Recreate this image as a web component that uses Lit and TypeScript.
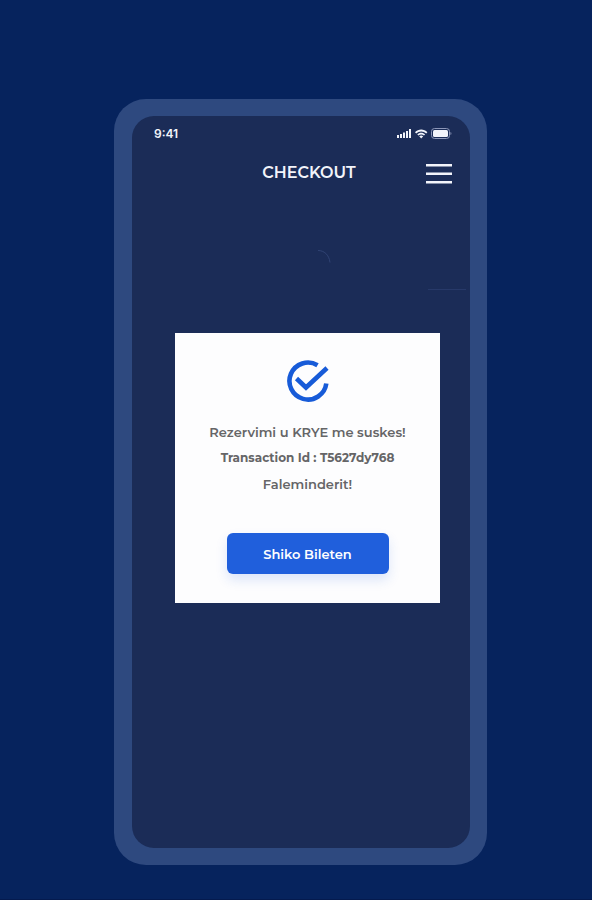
import { LitElement, html, css } from "lit";
import { customElement, property } from "lit/decorators.js";

@customElement("status-bar")
class StatusBar extends LitElement {
  static styles = css`
    :host {
      display: flex;
      align-items: center;
      justify-content: space-between;
      height: 20px;
      color: #f2f4fa;
    }
    .time {
      font-family: Inter, "Liberation Sans", sans-serif;
      font-size: 12px;
      line-height: 20px;
      font-weight: 600;
    }
    .signals {
      display: block;
    }
  `;
  render() {
    return html`
      <span class="time">9:41</span>
      <svg class="signals" width="56" height="14" viewBox="0 0 56 14" fill="currentColor" aria-hidden="true">
        <rect x="1" y="8" width="2" height="3" />
        <rect x="4" y="7" width="2" height="4" />
        <rect x="7" y="5.5" width="2" height="5.5" />
        <rect x="10" y="4" width="2" height="7" />
        <rect x="13" y="2" width="2" height="9" />
        <path d="M19 5.3C22.4 1.7 28 1.7 31.4 5.3L30.2 6.6C27.5 3.8 22.9 3.8 20.2 6.6Z" />
        <path d="M21.3 7.4C23.5 5.2 26.9 5.2 29.1 7.4L28 8.6C26.4 7 24 7 22.4 8.6Z" />
        <path d="M23.2 9.3C24.4 8.3 26 8.3 27.2 9.3L25.2 11.4Z" />
        <rect x="35.5" y="1.5" width="18" height="10" rx="3" fill="none" stroke="#8d97b8" />
        <rect x="37" y="3" width="15" height="7" rx="1.5" />
        <path d="M54.5 5v3c1.200-.5 1.200-2.500 0-3z" fill="#8d97b8" />
      </svg>
    `;
  }
}

@customElement("confirm-dialog")
class ConfirmDialog extends LitElement {
  @property({ attribute: "transaction-id" }) transactionId = "";

  static styles = css`
    :host {
      display: flex;
      flex-direction: column;
      align-items: center;
      padding: 27px 16px 29px;
      background: #fdfdfe;
      color: #656567;
      text-align: center;
    }
    .check {
      display: block;
      margin-bottom: 16px;
    }
    p {
      margin: 0;
      font-size: 13px;
      line-height: 26px;
      font-weight: 600;
      white-space: nowrap;
    }
    .transaction {
      font-size: 12px;
      font-weight: 700;
    }
    .action {
      width: 162px;
      height: 41px;
      margin-top: 36px;
      padding: 0;
      border: 0;
      border-radius: 6px;
      background: #205fdc;
      box-shadow: 0 6px 12px #205fdc26;
      color: #fff;
      font: inherit;
      font-size: 13px;
      font-weight: 600;
      cursor: pointer;
    }
  `;
  render() {
    return html`
      <svg class="check" width="43" height="43" viewBox="0 0 43 43" fill="none" stroke="#175bd8" stroke-width="4.600" aria-hidden="true">
        <path d="M31.500 5.200A18.500 18.500 0 1 0 40.300 23.500" />
        <path d="M10.500 18.500L20 27.500L41 8" />
      </svg>
      <p>Rezervimi u KRYE me suskes!</p>
      <p class="transaction">Transaction Id : ${this.transactionId}</p>
      <p>Faleminderit!</p>
      <button class="action" type="button">Shiko Bileten</button>
    `;
  }
}

@customElement("app-root")
class AppRoot extends LitElement {
  static styles = css`
    :host {
      display: block;
      box-sizing: border-box;
      min-height: 100vh;
      padding: 99px 105px 34px 114px;
      border-bottom: 1px solid #041a4e;
      background: #06235d;
      font-family: Montserrat, Inter, "Liberation Sans", sans-serif;
    }
    .phone {
      box-sizing: border-box;
      min-height: calc(100vh - 134px);
      display: flex;
      padding: 17px 17px 17px 18px;
      border-radius: 32px;
      background: #2e497f;
    }
    .screen {
      flex: 1;
      padding: 8px 18px 24px 22px;
      border-radius: 22px;
      background: #1b2c57;
    }
    .header {
      display: grid;
      grid-template-columns: 26px 1fr 26px;
      align-items: center;
      height: 30px;
      margin-top: 14px;
      color: #f2f4fa;
    }
    h1 {
      grid-column: 2;
      margin: 0 0 0 12px;
      font-size: 16px;
      line-height: 30px;
      font-weight: 600;
      text-align: center;
    }
    .menu {
      display: block;
      width: 26px;
      height: 30px;
      padding: 0;
      border: 0;
      background: none;
      color: inherit;
      cursor: pointer;
    }
    .menu svg {
      display: block;
    }
    .trace {
      display: flex;
      justify-content: flex-end;
      height: 145px;
      margin-right: -18px;
    }
    confirm-dialog {
      margin: 0 12px 0 21px;
    }
  `;
  render() {
    return html`
      <main class="phone">
        <div class="screen">
          <status-bar></status-bar>
          <header class="header">
            <h1>CHECKOUT</h1>
            <button class="menu" type="button" aria-label="Menu">
              <svg width="26" height="30" viewBox="0 0 26 30" fill="currentColor" aria-hidden="true">
                <rect y="6" width="26" height="2.500" />
                <rect y="14.500" width="26" height="2.500" />
                <rect y="23" width="26" height="2.500" />
              </svg>
            </button>
          </header>
          <div class="trace">
            <svg width="160" height="145" viewBox="0 0 160 145" fill="none" stroke="#304374" aria-hidden="true">
              <path d="M8 62.500c6 0 11 4 12 12" />
              <path d="M118 101.500h38" opacity=".6" />
            </svg>
          </div>
          <confirm-dialog transaction-id="T5627dy768"></confirm-dialog>
        </div>
      </main>
    `;
  }
}
